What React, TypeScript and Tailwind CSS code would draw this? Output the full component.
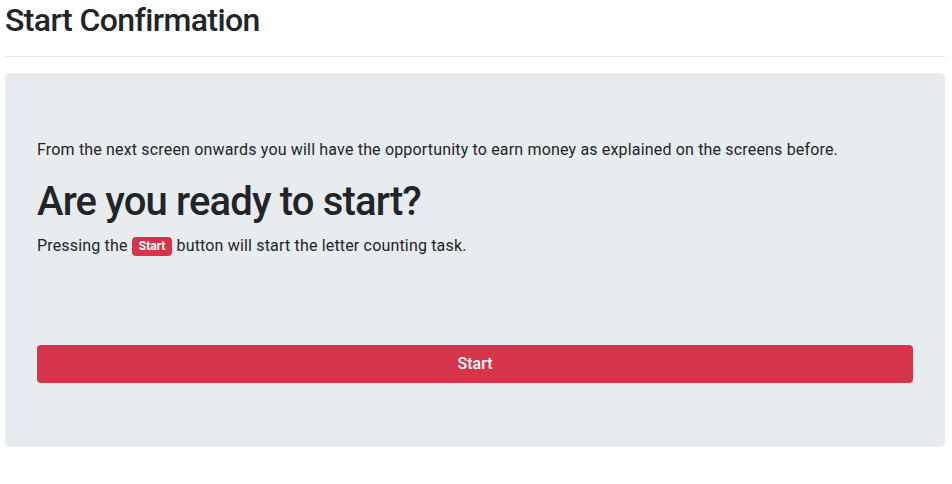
export default function App() {
  return (
    <div className="min-h-[484px] bg-white text-[#212529]" style={{ fontFamily: 'Roboto, "Liberation Sans", Arial, sans-serif' }}>
      <div className="ml-[5px] w-[940px]">
        <h2 className="m-0 pt-[1px] text-[32px] font-medium leading-[38px] tracking-[-0.6px]">Start Confirmation</h2>
        <hr className="mt-[17px] mb-0 border-0 border-t border-black/10" />
        <div className="mt-[16px] rounded-[5px] bg-[#e9ecef] px-[32px] pt-[65px] pb-[64px]">
          <p className="m-0 text-[16px] leading-[24px] tracking-[0.17px]">From the next screen onwards you will have the opportunity to earn money as explained on the screens before.</p>
          <h1 className="mt-[16px] mb-[8px] text-[40px] font-medium leading-[48px] tracking-[-0.85px]">Are you ready to start?</h1>
          <p className="m-0 text-[16px] leading-[24px] tracking-[0.17px]">
            Pressing the{' '}
            <span className="inline-block rounded-[4px] bg-[#d6344a] px-[7px] py-[3px] align-[1px] text-[12px] font-bold leading-[13px] tracking-normal text-white">Start</span>{' '}
            button will start the letter counting task.
          </p>
          <div className="h-[87px]" />
          <button className="block h-[38px] w-full rounded-[4px] bg-[#d6344a] text-[16px] font-medium text-white">Start</button>
        </div>
      </div>
    </div>
  );
}
